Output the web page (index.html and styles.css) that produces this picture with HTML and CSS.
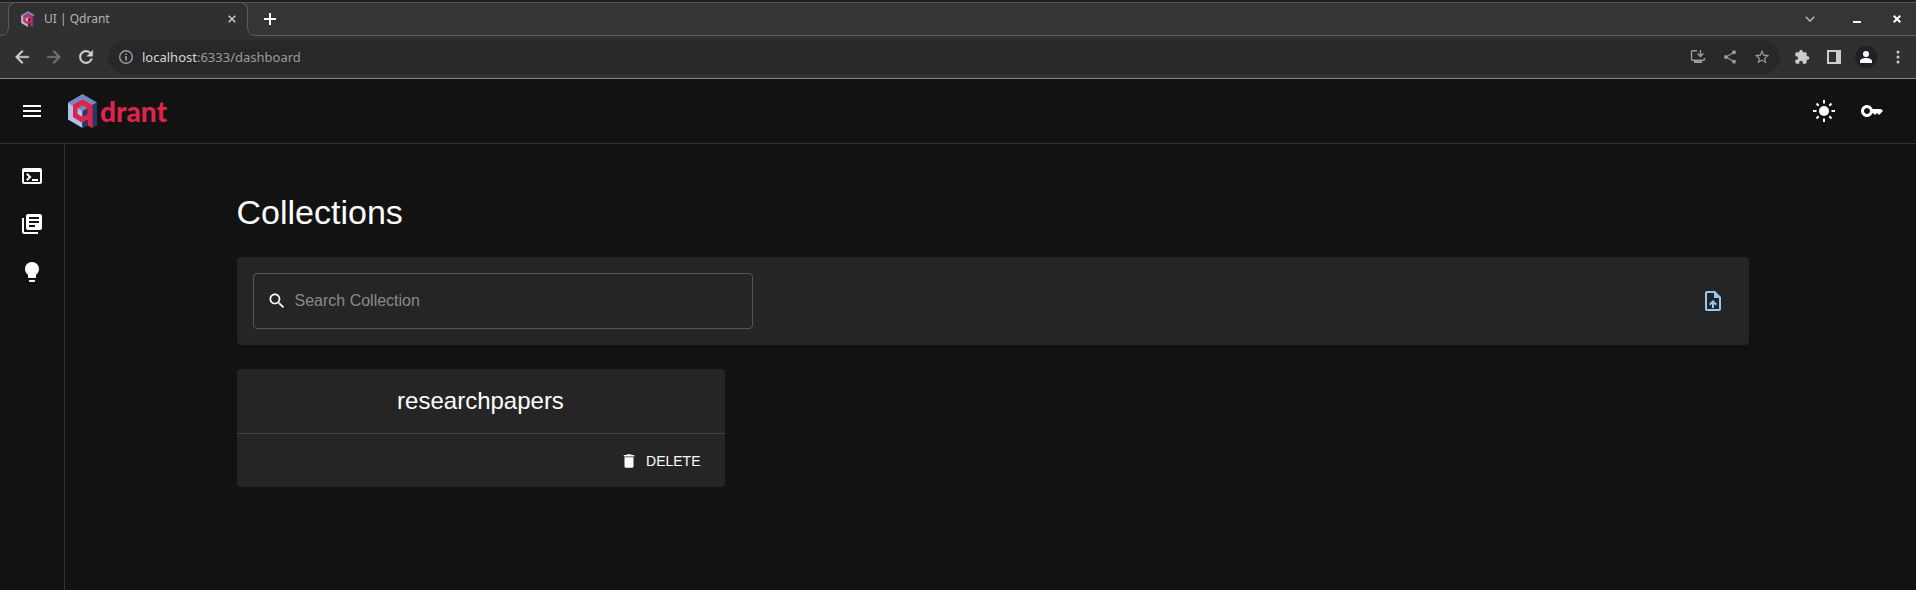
FILE: index.html
```html
<!DOCTYPE html>
<html lang="en">
<head>
<meta charset="utf-8">
<title>UI | Qdrant</title>
<link rel="stylesheet" href="styles.css">
</head>
<body>
<svg class="defs" aria-hidden="true">
  <symbol id="cube" viewBox="0 0 29 34">
    <path fill="#7589be" d="M14.500 0 29 8.500 24 11.500 14.500 6 5 11.500 0 8.500z"/>
    <path fill="#b2bfe8" d="M0 8.500 5 11.500V22.500L14.500 28V34L0 25.500z"/>
    <path fill="#24386c" d="M29 8.500V31.500L24 34V11.500z"/>
    <path fill="#dc244c" d="M14.500 5.500 24.500 11V34L19.500 31.500V26L14.500 29 5 23V11z"/>
    <path fill="#7589be" d="M14.500 11.500 19.500 14.300 14.500 17.200 9.500 14.300z"/>
    <path fill="#b2bfe8" d="M9.500 14.300 14.500 17.200V23L9.500 20z"/>
    <path fill="#24386c" d="M19.500 14.300V20L14.500 23V17.200z"/>
    <path fill="#24386c" d="M19.500 25.500V31.500L14.500 34V28.500z"/>
  </symbol>
</svg>

<div class="browser">
  <div class="tabstrip">
    <div class="tab">
      <svg class="foot foot-left" width="9" height="9" viewBox="0 0 9 9"><path fill="#303030" d="M0 0h9v9H0z"/><path fill="#353535" d="M0 0h8.500Q8.500 8.500 0 8.500z"/><path fill="none" stroke="#5c5c5c" d="M8.500 0Q8.500 8.500 0 8.500"/></svg>
      <svg class="favicon"><use href="#cube"/></svg>
      <span class="tab-title">UI | Qdrant</span>
      <button class="plain tab-close" aria-label="Close tab"><svg width="8" height="8" viewBox="0 0 8 8"><path d="M.7.7l6.600 6.600M7.300.7L.7 7.300" stroke="#c4c4c4" stroke-width="1.600"/></svg></button>
      <svg class="foot foot-right" width="9" height="9" viewBox="0 0 9 9"><path fill="#303030" d="M0 0h9v9H0z"/><path fill="#353535" d="M9 0H.5Q.5 8.500 9 8.500z"/><path fill="none" stroke="#5c5c5c" d="M.5 0Q.5 8.500 9 8.500"/></svg>
    </div>
    <button class="plain new-tab" aria-label="New tab"><svg width="12" height="12" viewBox="0 0 12 12"><path d="M6 0v12M0 6h12" stroke="#fff" stroke-width="2"/></svg></button>
    <div class="window-buttons">
      <button class="plain" aria-label="Search tabs"><svg width="10" height="6" viewBox="0 0 10 6"><path d="M.7.7L5 5 9.300.7" fill="none" stroke="#b5b5b5" stroke-width="1.500"/></svg></button>
      <button class="plain" aria-label="Minimize"><svg width="8" height="8" viewBox="0 0 8 8"><path d="M0 6h8v2H0z" fill="#fff"/></svg></button>
      <button class="plain" aria-label="Close window"><svg width="8" height="8" viewBox="0 0 8 8"><path d="M.7.7l6.600 6.600M7.300.7L.7 7.300" stroke="#fff" stroke-width="2"/></svg></button>
    </div>
  </div>
  <div class="toolbar">
    <button class="plain" aria-label="Back"><svg width="20" height="20" viewBox="0 0 24 24" fill="#d2d2d2" stroke="#d2d2d2" stroke-width=".5"><path d="M20 11H7.830l5.590-5.590L12 4l-8 8 8 8 1.410-1.410L7.830 13H20z"/></svg></button>
    <button class="plain" aria-label="Forward"><svg width="20" height="20" viewBox="0 0 24 24" fill="#757575" stroke="#757575" stroke-width=".5"><path d="M12 4l-1.410 1.410L16.170 11H4v2h12.170l-5.580 5.590L12 20l8-8z"/></svg></button>
    <button class="plain" aria-label="Reload"><svg width="20" height="20" viewBox="0 0 24 24" fill="#d2d2d2" stroke="#d2d2d2" stroke-width=".5"><path d="M17.650 6.350C16.200 4.900 14.210 4 12 4c-4.420 0-7.990 3.580-7.990 8s3.570 8 7.990 8c3.730 0 6.840-2.550 7.730-6h-2.080c-.82 2.330-3.040 4-5.650 4-3.310 0-6-2.690-6-6s2.690-6 6-6c1.660 0 3.140.69 4.220 1.780L13 11h7V4z"/></svg></button>
    <div class="address">
      <svg width="16" height="16" viewBox="0 0 16 16"><circle cx="8" cy="8" r="6.300" fill="none" stroke="#9aa0a6" stroke-width="1.400"/><path d="M7.200 7h1.600v4.500H7.200zM7.200 4.500h1.600v1.500H7.200z" fill="#9aa0a6"/></svg>
      <span class="url"><span class="host">localhost</span>:6333/dashboard</span>
      <button class="plain" aria-label="Install"><svg width="16" height="16" viewBox="0 0 16 16"><path d="M7 1.800H2.500q-1 0-1 1v7.400q0 1 1 1h11q1 0 1-1V9M10.500 1v6M7.600 4.500l2.900 2.900 2.900-2.900" fill="none" stroke="#9a9a9a" stroke-width="1.400"/><path d="M4 11h8v3H4z" fill="#9a9a9a"/></svg></button>
      <button class="plain" aria-label="Share"><svg width="16" height="16" viewBox="0 0 24 24" fill="#9a9a9a"><path d="M18 16.080c-.76 0-1.440.3-1.960.77L8.910 12.700c.05-.23.09-.46.09-.7s-.04-.47-.09-.7l7.050-4.110c.54.5 1.250.81 2.040.81 1.660 0 3-1.340 3-3s-1.340-3-3-3-3 1.340-3 3c0 .24.040.47.090.7L8.040 9.810C7.500 9.310 6.790 9 6 9c-1.660 0-3 1.340-3 3s1.340 3 3 3c.79 0 1.500-.31 2.040-.81l7.120 4.160c-.05.21-.08.43-.08.65 0 1.610 1.310 2.920 2.920 2.920s2.920-1.310 2.920-2.920-1.310-2.920-2.920-2.920"/></svg></button>
      <button class="plain" aria-label="Bookmark"><svg width="16" height="16" viewBox="1 1 22 22" fill="#9a9a9a"><path d="M22 9.240l-7.190-.62L12 2 9.190 8.630 2 9.240l5.460 4.730L5.820 21 12 17.270 18.180 21l-1.630-7.030zM12 15.400l-3.760 2.270 1-4.280-3.320-2.880 4.380-.38L12 6.100l1.710 4.040 4.380.38-3.320 2.880 1 4.280z"/></svg></button>
    </div>
    <div class="extensions">
      <button class="plain" aria-label="Extensions"><svg width="16" height="16" viewBox="0 0 24 24" fill="#cdcdcd"><path d="M20.500 11H19V7c0-1.100-.9-2-2-2h-4V3.500C13 2.120 11.880 1 10.500 1S8 2.120 8 3.500V5H4c-1.100 0-1.990.9-1.990 2v3.800H3.500c1.490 0 2.700 1.210 2.700 2.700s-1.210 2.700-2.700 2.700H2V20c0 1.100.9 2 2 2h3.800v-1.500c0-1.490 1.210-2.700 2.700-2.700s2.700 1.210 2.700 2.700V22H17c1.100 0 2-.9 2-2v-4h1.500c1.380 0 2.500-1.120 2.500-2.500S21.880 11 20.500 11"/></svg></button>
      <button class="plain" aria-label="Side panel"><svg width="14" height="14" viewBox="0 0 14 14"><path fill="#cdcdcd" fill-rule="evenodd" d="M0 0h14v14H0zM2 2v10h7V2z"/></svg></button>
      <button class="plain" aria-label="Profile"><svg width="22" height="22" viewBox="0 0 22 22"><circle cx="11" cy="11" r="11" fill="#202124"/><circle cx="11" cy="8" r="3" fill="#fff"/><path fill="#fff" d="M5 17v-2c0-2 3.500-3 6-3s6 1 6 3v2z"/></svg></button>
      <button class="plain" aria-label="Menu"><svg width="4" height="14" viewBox="0 0 4 14" fill="#cdcdcd"><circle cx="2" cy="2" r="1.500"/><circle cx="2" cy="7" r="1.500"/><circle cx="2" cy="12" r="1.500"/></svg></button>
    </div>
  </div>
</div>

<header class="app-bar">
  <button class="plain" aria-label="Open menu"><svg class="icon" viewBox="0 0 24 24"><path d="M3 18h18v-2H3zm0-5h18v-2H3zm0-7v2h18V6z"/></svg></button>
  <a class="logo" href="#" aria-label="Qdrant"><svg class="logo-mark"><use href="#cube"/></svg><span>drant</span></a>
  <div class="app-actions">
    <button class="plain" aria-label="Toggle theme"><svg class="icon" viewBox="0 0 24 24"><circle cx="12" cy="12" r="5"/><path d="M12 1v3.500M12 19.500V23M1 12h3.500M19.500 12H23M4.500 4.500l2.200 2.200M17.300 17.300l2.200 2.200M4.500 19.500l2.200-2.200M17.300 6.700l2.200-2.200" stroke="#fff" stroke-width="2"/></svg></button>
    <button class="plain" aria-label="API key"><svg class="icon" viewBox="0 0 24 24"><path d="M21 10h-8.350C11.830 7.670 9.610 6 7 6c-3.310 0-6 2.690-6 6s2.690 6 6 6c2.610 0 4.830-1.670 5.650-4H13l2 2 2-2 2 2 4-4.040zM7 15c-1.650 0-3-1.350-3-3s1.350-3 3-3 3 1.350 3 3-1.350 3-3 3"/></svg></button>
  </div>
</header>

<div class="body">
  <nav class="sidebar">
    <a href="#" aria-label="Console"><svg class="icon" viewBox="0 0 24 24"><path d="M20 4H4c-1.110 0-2 .9-2 2v12c0 1.100.89 2 2 2h16c1.100 0 2-.9 2-2V6c0-1.100-.89-2-2-2m0 14H4V8h16zm-2-1h-6v-2h6zM7.500 17l-1.410-1.410L8.670 13l-2.590-2.590L7.500 9l4 4z"/></svg></a>
    <a href="#" aria-label="Collections"><svg class="icon" viewBox="0 0 24 24"><path d="M4 6H2v14c0 1.100.9 2 2 2h14v-2H4zm16-4H8c-1.100 0-2 .9-2 2v12c0 1.100.9 2 2 2h12c1.100 0 2-.9 2-2V4c0-1.100-.9-2-2-2m-1 9H9V9h10zm-4 4H9v-2h6zm4-8H9V5h10z"/></svg></a>
    <a href="#" aria-label="Tutorial"><svg class="icon" viewBox="0 0 24 24"><path d="M9 21c0 .55.450 1 1 1h4c.55 0 1-.45 1-1v-1H9zm3-19C8.140 2 5 5.140 5 9c0 2.380 1.190 4.470 3 5.740V17c0 .55.450 1 1 1h6c.55 0 1-.45 1-1v-2.260c1.810-1.270 3-3.360 3-5.740 0-3.860-3.140-7-7-7"/></svg></a>
  </nav>
  <main class="main">
    <div class="container">
      <h1>Collections</h1>
      <section class="panel search-panel">
        <label class="search">
          <svg width="20" height="20" viewBox="0 0 24 24" fill="#fff"><path d="M15.500 14h-.79l-.28-.27C15.410 12.590 16 11.110 16 9.500 16 5.910 13.090 3 9.500 3S3 5.910 3 9.500 5.910 16 9.500 16c1.610 0 3.090-.59 4.230-1.570l.27.280v.79l5 4.990L20.490 19zm-6 0C7.010 14 5 11.990 5 9.500S7.010 5 9.500 5 14 7.010 14 9.500 11.990 14 9.500 14"/></svg>
          <input type="text" placeholder="Search Collection" aria-label="Search Collection">
        </label>
        <button class="plain upload" aria-label="Upload snapshot"><svg width="24" height="24" viewBox="0 0 24 24" fill="#90caf9"><path fill-rule="evenodd" d="M6 2h8l6 6v12c0 1.100-.9 2-2 2H5.990C4.890 22 4 21.100 4 20V4c0-1.100.9-2 2-2zM6 4v16h12V9h-5V4zM8 15.010l1.410 1.410L11 14.840V19h2v-4.160l1.590 1.590L16 15.010 12.010 11z"/></svg></button>
      </section>
      <article class="panel card">
        <h2>researchpapers</h2>
        <div class="card-actions">
          <button class="plain delete"><svg width="18" height="18" viewBox="0 0 24 24" fill="#fff"><path d="M6 19c0 1.100.9 2 2 2h8c1.100 0 2-.9 2-2V7H6zM19 4h-3.500l-1-1h-5l-1 1H5v2h14z"/></svg>DELETE</button>
        </div>
      </article>
    </div>
  </main>
</div>
</body>
</html>
```
FILE: styles.css
```css
* { box-sizing: border-box; }
body {
  margin: 0;
  min-height: 100vh;
  display: flex;
  flex-direction: column;
  background: #121212;
  color: #fff;
  font-family: "Liberation Sans", Arial, sans-serif;
}
svg { display: block; flex: none; }
.defs { position: absolute; width: 0; height: 0; }
.plain {
  display: flex;
  align-items: center;
  justify-content: center;
  padding: 0;
  border: 0;
  background: none;
  color: inherit;
  font: inherit;
}
.icon { width: 24px; height: 24px; fill: #fff; }

/* Browser chrome */
.browser { font-family: "Noto Sans", sans-serif; border-bottom: 1px solid #888; }
.tabstrip {
  display: flex;
  align-items: center;
  height: 36px;
  padding-left: 8px;
  border-top: 2px solid #1e1e1e;
  background: #353535;
  box-shadow: inset 0 1px #555, inset 0 -1px #5c5c5c;
}
.tab {
  position: relative;
  display: flex;
  align-items: center;
  align-self: stretch;
  width: 240px;
  padding: 0 11px 2px;
  gap: 8px;
  border: 1px solid #5c5c5c;
  border-bottom: 0;
  border-radius: 8px 8px 0 0;
  background: #303030;
}
.foot { position: absolute; bottom: 0; }
.foot-left { left: -9px; }
.foot-right { right: -9px; }
.favicon { width: 16px; height: 16px; }
.tab-title { flex: 1; font-size: 12px; color: #b4b4b4; }
.new-tab { margin-left: 16px; }
.window-buttons { display: flex; align-items: center; margin-left: auto; padding-right: 15px; gap: 38px; }
.window-buttons .plain:last-child { margin-left: -6px; }
.toolbar { display: flex; align-items: center; height: 42px; padding: 0 8px 0 12px; gap: 12px; background: #303030; }
.address {
  display: flex;
  align-items: center;
  flex: 1;
  height: 34px;
  padding: 0 10px;
  gap: 16px;
  border-radius: 17px;
  background: #282828;
}
.url { flex: 1; margin-left: -8px; font-size: 13px; color: #9a9a9a; }
.host { color: #d6d6d6; }
.extensions { display: flex; align-items: center; gap: 12px; }
.extensions .plain { width: 20px; }

/* Application */
.app-bar {
  display: flex;
  align-items: center;
  height: 65px;
  padding: 0 32px 0 20px;
  gap: 24px;
  border-bottom: 1px solid #333;
}
.logo { display: flex; align-items: center; gap: 3px; color: #dc244c; text-decoration: none; font: 900 28px/34px Lato, sans-serif; }
.logo-mark { width: 29px; height: 34px; }
.app-actions { display: flex; gap: 24px; margin-left: auto; }
.body { display: flex; flex: 1; }
.sidebar { width: 65px; padding: 8px 0; border-right: 1px solid #333; }
.sidebar a { display: flex; align-items: center; justify-content: center; height: 48px; }
.main { flex: 1; padding: 47px 0 24px 4px; }
.container { max-width: 1512px; margin: 0 auto; }
h1 { margin: 0 0 24px; font-size: 34px; line-height: 42px; font-weight: 400; }
.panel { border-radius: 4px; background: #252525; }
.search-panel { display: flex; align-items: center; justify-content: space-between; padding: 16px; }
.search {
  display: flex;
  align-items: center;
  width: 500px;
  height: 56px;
  padding: 0 13px;
  gap: 8px;
  border: 1px solid #555;
  border-radius: 4px;
}
.search input { flex: 1; padding: 0; border: 0; outline: 0; background: none; color: #fff; font: inherit; font-size: 16px; }
.search input::placeholder { color: #8a8a8a; opacity: 1; }
.upload { padding: 8px; }
.card { width: 488px; margin-top: 24px; }
h2 { margin: 0; padding: 16px; border-bottom: 1px solid #444; font-size: 24px; line-height: 32px; font-weight: 400; text-align: center; }
.card-actions { display: flex; justify-content: flex-end; padding: 8px; }
.delete { height: 37px; padding: 0 16px; gap: 8px; font-size: 14px; }
```
